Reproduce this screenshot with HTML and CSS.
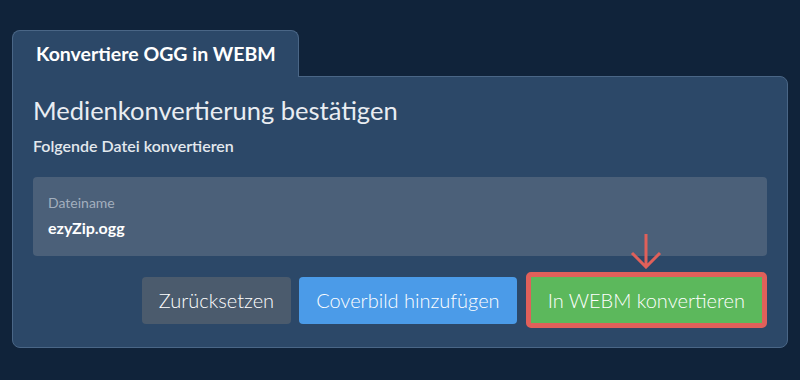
FILE: index.html
```html
<!DOCTYPE html>
<html lang="de">
<head>
    <meta charset="UTF-8">
    <meta name="viewport" content="width=device-width, initial-scale=1.0">
    <title>Konvertiere OGG in WEBM</title>
    <link rel="stylesheet" href="styles.css">
</head>
<body>
    <div class="page">
        <div class="tab">Konvertiere OGG in WEBM</div>
        <div class="panel">
            <h2 class="title">Medienkonvertierung bestätigen</h2>
            <p class="subtitle">Folgende Datei konvertieren</p>
            <div class="file-box">
                <div class="file-label">Dateiname</div>
                <div class="file-name">ezyZip.ogg</div>
            </div>
            <div class="actions">
                <button class="btn btn-gray">Zurücksetzen</button>
                <button class="btn btn-blue">Coverbild hinzufügen</button>
                <div class="convert-wrap">
                    <svg class="arrow" width="32" height="36" viewBox="0 0 32 36">
                        <path d="M16 1 V34 M2 20 L16 34 L30 20" fill="none" stroke="#e0605a" stroke-width="3"/>
                    </svg>
                    <button class="btn btn-green">In WEBM konvertieren</button>
                </div>
            </div>
        </div>
    </div>
</body>
</html>
```

FILE: styles.css
```css
body {
    margin: 0;
    background-color: #10233a;
    font-family: Lato, "Noto Sans", sans-serif;
    color: #eef1f5;
}
.page {
    padding: 30px 12px 0 12px;
}
.tab {
    display: inline-block;
    position: relative;
    z-index: 1;
    margin-bottom: -1px;
    padding: 0 22px 0 23px;
    height: 46px;
    line-height: 46px;
    background: #2c4868;
    border: 1px solid #4a6686;
    border-bottom: none;
    border-radius: 8px 8px 0 0;
    font-size: 19.5px;
    font-weight: bold;
    color: #ffffff;
}
.panel {
    background: #2c4868;
    border: 1px solid #4a6686;
    border-radius: 0 8px 8px 8px;
    padding: 18px 20px 19px 20px;
}
.title {
    margin: 0 0 11px 0;
    font-size: 25.5px;
    font-weight: normal;
    color: #e9edf2;
}
.subtitle {
    margin: 0;
    font-size: 16px;
    font-weight: 600;
    color: #e3e8ee;
}
.file-box {
    margin-top: 22px;
    background: #4b6079;
    border-radius: 4px;
    padding: 17px 15px 19px 15px;
}
.file-label {
    font-size: 14px;
    color: #a3afbe;
}
.file-name {
    margin-top: 7px;
    font-size: 16px;
    font-weight: bold;
    color: #ffffff;
}
.actions {
    display: flex;
    justify-content: flex-end;
    align-items: center;
    gap: 8px;
    margin-top: 16px;
}
.btn {
    height: 47px;
    padding: 0 17px;
    border: none;
    border-radius: 4px;
    font-family: Lato, "Noto Sans", sans-serif;
    font-size: 20px;
    font-weight: 300;
    color: #ffffff;
    cursor: pointer;
}
.btn-gray {
    background-color: #4b5b6d;
}
.btn-blue {
    background-color: #4b9be8;
}
.convert-wrap {
    position: relative;
    margin-left: 1px;
}
.btn-green {
    display: block;
    height: 56px;
    padding: 0 17px;
    background-color: #5cb85c;
    border: 5px solid #e0605a;
    border-radius: 5px;
}
.arrow {
    position: absolute;
    left: 50%;
    bottom: 100%;
    margin-left: -16px;
    margin-bottom: 3px;
}
```
